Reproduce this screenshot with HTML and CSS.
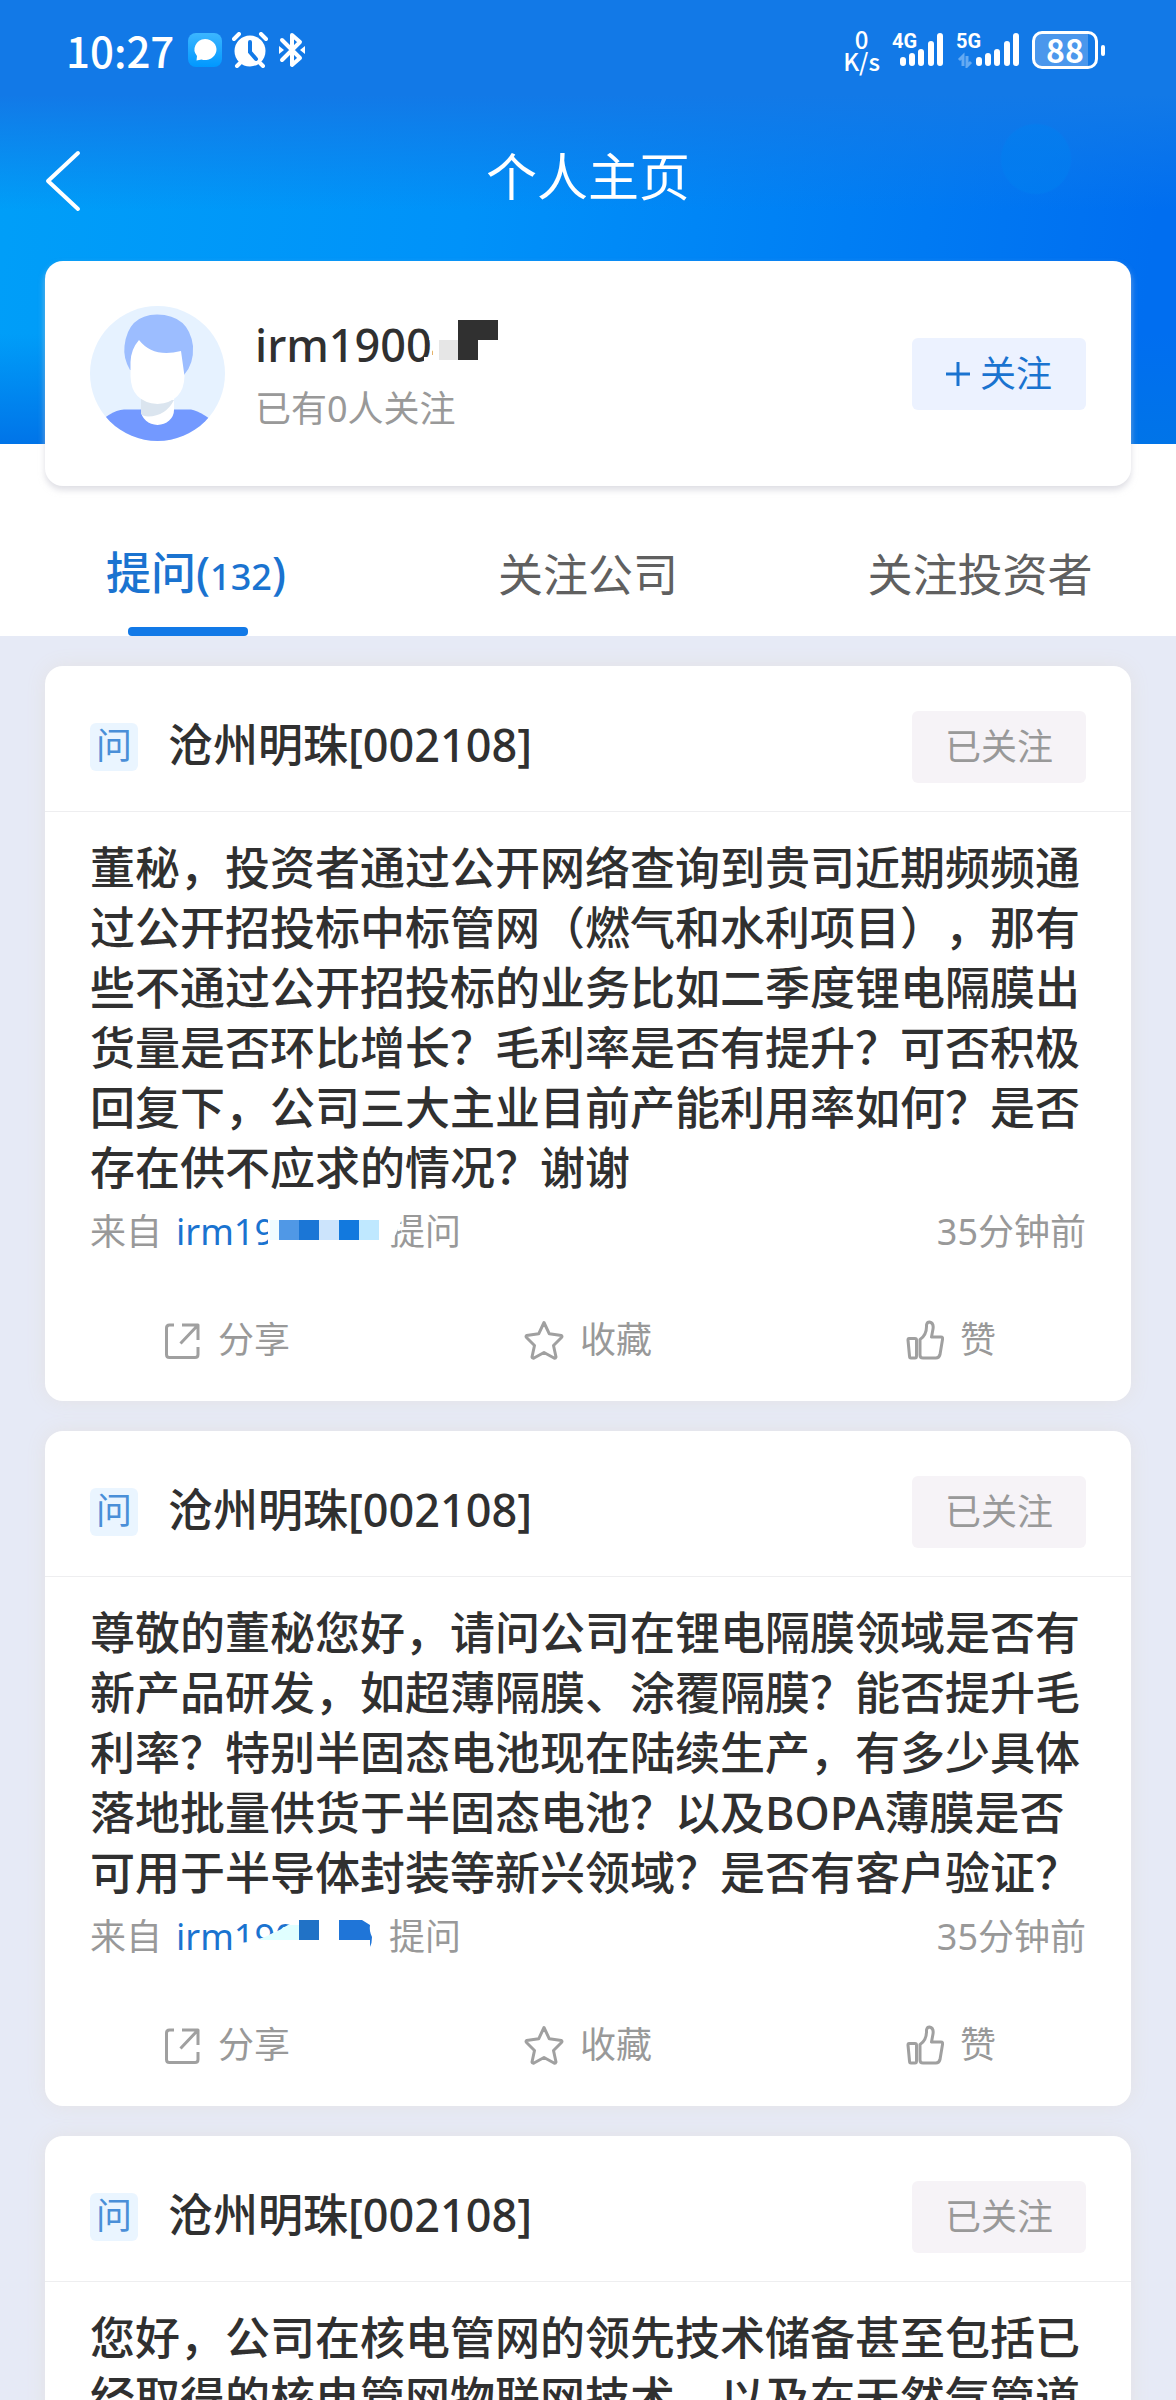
FILE: index.html
```html
<!DOCTYPE html>
<html lang="zh-CN">
<head>
<meta charset="utf-8">
<meta name="viewport" content="width=device-width, initial-scale=1">
<title>个人主页</title>
<link rel="stylesheet" href="styles.css">
</head>
<body>
<svg class="sprite" aria-hidden="true">
  <symbol id="icon-share" viewBox="0 0 40 40">
    <path d="M12 5H7.500Q4.500 5 4.500 8V34.500Q4.500 37.500 7.500 37.500H33Q36 37.500 36 34.500V27M20 5H36V20M36 5L18.500 23.500" />
  </symbol>
  <symbol id="icon-star" viewBox="0 0 40 40">
    <path d="M20 2.500L25.300 13.800L37.500 15.500Q38.500 16.500 37.500 17.500L29.500 25.500L32 37Q31.500 38.500 30 38L20 32.500L10 38Q8.500 38.500 8 37L10.500 25.500L2.500 17.500Q1.500 16.500 2.500 15.500L14.700 13.800Z" />
  </symbol>
  <symbol id="icon-like" viewBox="0 0 40 40">
    <path d="M5 18.500H11Q12.500 18.500 12.500 20V36Q12.500 38 11 38H7Q5.500 38 5.500 36L4 20Q4 18.500 5 18.500ZM16 19.500Q23 15 22.500 5Q23 2 25.500 2Q30 3 29 9L27.500 17H37Q39 17 38.500 19.500L36 34.500Q35 38 32 38H19Q16 38 16 35Z" />
  </symbol>
</svg>

<div class="app">
  <header class="hero">
    <div class="status">
      <div class="status-side">
        <span class="clock">10:27</span>
        <svg class="chat" width="34" height="34" viewBox="0 0 34 34" aria-hidden="true">
          <defs><linearGradient id="chatFill" x1="0" y1="0" x2="0" y2="1"><stop offset="0" stop-color="#3cb6ff"/><stop offset="1" stop-color="#0098ff"/></linearGradient></defs>
          <rect width="34" height="34" rx="8" fill="url(#chatFill)"/>
          <path d="M17 6a11.500 10.500 0 1 1-3.500 20.500L8.500 27.500L9 23A11.500 10.500 0 0 1 17 6Z" fill="#fff"/>
        </svg>
        <svg class="alarm" width="36" height="36" viewBox="0 0 36 36" aria-hidden="true">
          <circle cx="18" cy="19" r="15.500" fill="#fff"/>
          <path d="M2 7L7 2M34 7L29 2M8 31L5 34M28 31L31 34" stroke="#fff" stroke-width="4" stroke-linecap="round"/>
          <path d="M18 10V20L24 27" stroke="#1279e7" stroke-width="4" fill="none" stroke-linecap="round"/>
        </svg>
        <svg width="26" height="36" viewBox="0 0 26 36" aria-hidden="true">
          <path d="M3 8L21 26L13 33V3L21 10L3 28" stroke="#fff" stroke-width="4" fill="none" stroke-linejoin="round" stroke-linecap="round"/>
          <path d="M0 14L5 18L0 22ZM26 14L21 18L26 22Z" fill="#fff"/>
        </svg>
      </div>
      <div class="status-side">
        <span class="speed">0<br>K/s</span>
        <span class="signal">
          <span class="net">4G</span>
          <svg width="52" height="36" viewBox="0 0 52 36" aria-hidden="true"><path d="M11 28V31M20 24V31M29 20V31M39 12V31M48 4V31" stroke="#fff" stroke-width="6" stroke-linecap="round"/></svg>
        </span>
        <span class="signal">
          <span class="net">5G</span>
          <svg width="64" height="36" viewBox="0 0 64 36" aria-hidden="true"><path d="M23 28V31M32 24V31M41 20V31M51 12V31M60 4V31" stroke="#fff" stroke-width="6" stroke-linecap="round"/><path d="M3 28L7 24V34M11 24V34L15 30" stroke="#65aaf2" stroke-width="3" fill="none"/></svg>
        </span>
        <span class="battery">88</span>
      </div>
    </div>

    <nav class="nav">
      <button class="back" type="button" aria-label="返回">
        <svg width="36" height="62" viewBox="0 0 36 62" aria-hidden="true"><path d="M33 3L3 31L33 59" stroke="#fff" stroke-width="4" fill="none" stroke-linecap="round" stroke-linejoin="round"/></svg>
      </button>
      <h1 class="nav-title">个人主页</h1>
    </nav>

    <section class="profile">
      <svg class="avatar" viewBox="0 0 135 135" aria-hidden="true">
        <defs><clipPath id="face"><circle cx="67.500" cy="67.500" r="67.500"/></clipPath></defs>
        <g clip-path="url(#face)">
          <rect width="135" height="135" fill="#e6f2ff"/>
          <path d="M0 125Q20 104 34 103.500H101Q112 105 135 125V135H0Z" fill="#7399ff"/>
          <path d="M51 90H84V104A16.500 15 0 0 1 51 104Z" fill="#fff"/>
          <path d="M51 92L84 94Q76 110 58 110.500Q53 110 51 108Z" fill="#dbe5ef"/>
          <path d="M40 64Q33 52 34.500 40Q38 9 67 8.500Q99 9 103 40Q104 58 94 69Z" fill="#9cbdff"/>
          <path d="M40.500 56Q41 43 49 34Q63 52 91 45L94.500 70Q94 96 67.500 98Q41 96 40.500 70Z" fill="#fff"/>
        </g>
      </svg>
      <div class="profile-text">
        <h2 class="profile-name">irm19004
          <svg class="name-mask" width="76" height="48" viewBox="0 0 76 48" aria-hidden="true">
            <path d="M10 0H76V48H0V36H9V19H5Z" fill="#fff"/>
            <path d="M15 19H34V39H15Z" fill="#e6e6e6"/>
            <path d="M34 -1H74V19H54V39H34Z" fill="#303030"/>
          </svg>
        </h2>
        <p class="profile-fans">已有0人关注</p>
      </div>
      <button class="follow" type="button">
        <svg width="24" height="24" viewBox="0 0 24 24" aria-hidden="true"><path d="M12 0V24M0 12H24" stroke="#1a73d0" stroke-width="3"/></svg>关注
      </button>
    </section>

    <div class="tabs" role="tablist">
      <button class="tab tab-active" type="button" role="tab" aria-selected="true">提问(<span class="tab-count">132</span>)</button>
      <button class="tab" type="button" role="tab" aria-selected="false">关注公司</button>
      <button class="tab" type="button" role="tab" aria-selected="false">关注投资者</button>
    </div>
  </header>

  <main class="feed">
    <article class="card">
      <header class="card-head">
        <span class="badge">问</span>
        <h3 class="company">沧州明珠[002108]</h3>
        <button class="follow followed" type="button">已关注</button>
      </header>
      <p class="question">董秘，投资者通过公开网络查询到贵司近期频频通过公开招投标中标管网（燃气和水利项目），那有些不通过公开招投标的业务比如二季度锂电隔膜出货量是否环比增长？毛利率是否有提升？可否积极回复下，公司三大主业目前产能利用率如何？是否存在供不应求的情况？谢谢</p>
      <div class="meta">
        <span>来自</span>
        <a class="asker" href="#">irm19
          <svg class="asker-mask" width="230" height="48" viewBox="0 0 230 48" aria-hidden="true">
            <path d="M94 0H218L229 8L222 26L216 36H94Z" fill="#fff"/>
            <path d="M96 12H105V32H96Z" fill="#effcff"/>
            <path d="M105 12H125V32H105Z" fill="#5098e6"/>
            <path d="M125 12H145V32H125Z" fill="#1b76d6"/>
            <path d="M145 12H165V32H145Z" fill="#cce4fc"/>
            <path d="M165 12H185V32H165Z" fill="#1279de"/>
            <path d="M185 12H205V32H185Z" fill="#bfe8ff"/>
          </svg>
        </a>
        <span>提问</span>
        <time class="ago">35分钟前</time>
      </div>
      <footer class="actions">
        <button class="action" type="button"><svg class="icon" aria-hidden="true"><use href="#icon-share"/></svg>分享</button>
        <button class="action" type="button"><svg class="icon" aria-hidden="true"><use href="#icon-star"/></svg>收藏</button>
        <button class="action" type="button"><svg class="icon" aria-hidden="true"><use href="#icon-like"/></svg>赞</button>
      </footer>
    </article>

    <article class="card">
      <header class="card-head">
        <span class="badge">问</span>
        <h3 class="company">沧州明珠[002108]</h3>
        <button class="follow followed" type="button">已关注</button>
      </header>
      <p class="question">尊敬的董秘您好，请问公司在锂电隔膜领域是否有新产品研发，如超薄隔膜、涂覆隔膜？能否提升毛利率？特别半固态电池现在陆续生产，有多少具体落地批量供货于半固态电池？以及BOPA薄膜是否可用于半导体封装等新兴领域？是否有客户验证？</p>
      <div class="meta">
        <span>来自</span>
        <a class="asker" href="#">irm190
          <svg class="asker-mask" width="230" height="48" viewBox="0 0 230 48" aria-hidden="true">
            <path d="M58 31L74 29L88 25L106 17L125 14V48H58Z" fill="#fff"/>
            <path d="M84 27L104 18L114 12H125V27Z" fill="#e0ffff"/>
            <path d="M125 7H145V27H125Z" fill="#2172c6"/>
            <path d="M165 7H188L196 12Q195 18 198 24Q198 30 196 34V27H165Z" fill="#1f75d8"/>
          </svg>
        </a>
        <span>提问</span>
        <time class="ago">35分钟前</time>
      </div>
      <footer class="actions">
        <button class="action" type="button"><svg class="icon" aria-hidden="true"><use href="#icon-share"/></svg>分享</button>
        <button class="action" type="button"><svg class="icon" aria-hidden="true"><use href="#icon-star"/></svg>收藏</button>
        <button class="action" type="button"><svg class="icon" aria-hidden="true"><use href="#icon-like"/></svg>赞</button>
      </footer>
    </article>

    <article class="card">
      <header class="card-head">
        <span class="badge">问</span>
        <h3 class="company">沧州明珠[002108]</h3>
        <button class="follow followed" type="button">已关注</button>
      </header>
      <p class="question">您好，公司在核电管网的领先技术储备甚至包括已经取得的核电管网物联网技术，以及在天然气管道</p>
    </article>
  </main>
</div>
</body>
</html>
```
FILE: styles.css
```css
* {
  box-sizing: border-box;
  margin: 0;
  padding: 0;
}

body {
  font-family: "Noto Sans", "Noto Sans CJK SC", sans-serif;
  font-size: 36px;
  line-height: 48px;
  color: #303030;
  background: #e6eaf6;
  text-spacing-trim: space-all;
}

button {
  font: inherit;
  color: inherit;
  border: 0;
  background: none;
}

svg {
  flex: none;
}

.sprite {
  display: none;
}

.app {
  display: flex;
  flex-direction: column;
  height: 100vh;
}

/* Header */

.hero {
  flex: none;
  background:
    radial-gradient(circle at calc(100% - 140px) 159px, #0080f080 34px, #0080f000 36px) 0 0 / 100% 444px no-repeat,
    linear-gradient(180deg, #1279e7 0, #1279e7 95px, #1279e700 210px) 0 0 / 100% 444px no-repeat,
    linear-gradient(0deg, #0074e8 0, #0074e800 110px) 0 0 / 100% 444px no-repeat,
    linear-gradient(98deg, #009ff8 0, #0092f9 40%, #006ef0 96%) 0 0 / 100% 444px no-repeat,
    #fff;
}

.status {
  display: flex;
  justify-content: space-between;
  align-items: center;
  height: 100px;
  padding: 0 78px 0 66px;
  color: #fff;
}

.status-side {
  display: flex;
  align-items: center;
}

.clock {
  font-family: "Noto Sans CJK SC", sans-serif;
  font-size: 42px;
  font-weight: 500;
}

.chat {
  margin: 0 10px 0 14px;
}

.alarm {
  margin-right: 11px;
}

.speed {
  font-family: "Noto Sans CJK SC", sans-serif;
  font-size: 24px;
  font-weight: 500;
  line-height: 22px;
  text-align: center;
}

.signal {
  position: relative;
  display: flex;
  margin-left: 12px;
}

.net {
  position: absolute;
  top: 0;
  left: 0;
  font-family: Roboto, sans-serif;
  font-size: 20px;
  font-weight: 700;
  line-height: 18px;
}

.battery {
  position: relative;
  width: 66px;
  height: 38px;
  margin-left: 12px;
  border: 3px solid #fff;
  border-radius: 10px;
  background: linear-gradient(90deg, #4b97ec 88%, #1279e7 88%);
  font-family: "Noto Sans CJK SC", sans-serif;
  font-size: 32px;
  font-weight: 700;
  line-height: 30px;
  text-align: center;
}

.battery::after {
  content: "";
  position: absolute;
  top: 11px;
  right: -10px;
  width: 4px;
  height: 11px;
  border-radius: 2px;
  background: #fff;
}

.nav {
  display: grid;
  grid-template-columns: 90px 1fr 90px;
  align-items: center;
  height: 161px;
  color: #fff;
}

.back {
  display: flex;
  padding-left: 45px;
}

.nav-title {
  padding-bottom: 10px;
  font-size: 51px;
  font-weight: 400;
  line-height: 60px;
  text-align: center;
}

.profile {
  display: flex;
  align-items: center;
  height: 225px;
  margin: 0 45px;
  padding: 0 45px;
  border-radius: 18px;
  background: #fff;
  box-shadow: 0 4px 6px #c8c8d299;
}

.avatar {
  width: 135px;
  height: 135px;
  margin-right: 30px;
}

.profile-text {
  flex: 1;
}

.profile-name {
  position: relative;
  width: max-content;
  font-size: 45px;
  font-weight: 500;
  line-height: 60px;
}

.name-mask {
  position: absolute;
  top: 6px;
  left: 169px;
  overflow: visible;
}

.profile-fans {
  padding-top: 10px;
  color: #999;
}

.follow {
  display: flex;
  justify-content: center;
  align-items: center;
  gap: 10px;
  width: 174px;
  height: 72px;
  border-radius: 6px;
  background: #ecf2ff;
  color: #1a73d0;
}

.followed {
  background: #f6f3f7;
  color: #999;
}

.tabs {
  display: grid;
  grid-template-columns: repeat(3, 1fr);
  height: 150px;
  padding-top: 28px;
}

.tab {
  position: relative;
  font-size: 45px;
  color: #606060;
}

.tab-active {
  font-weight: 500;
  color: #1a73d0;
}

.tab-active::after {
  content: "";
  position: absolute;
  bottom: 0;
  left: calc(50% - 68px);
  width: 120px;
  height: 9px;
  border-radius: 4px;
  background: #1279e7;
}

.tab-count {
  font-size: 36px;
}

/* Question list */

.feed {
  display: flex;
  flex: 1;
  flex-direction: column;
  gap: 30px;
  min-height: 0;
  padding: 30px 45px;
  overflow-y: auto;
  scrollbar-width: none;
}

.card {
  flex: none;
  border-radius: 18px;
  background: #fff;
  box-shadow: 0 0 20px #e4e2e4;
}

.card-head {
  display: flex;
  align-items: center;
  padding: 45px 45px 28px;
  border-bottom: 1px solid #eeeef0;
}

.badge {
  width: 48px;
  height: 48px;
  margin-right: 30px;
  border-radius: 6px;
  background: #eaf5ff;
  color: #4a8fd8;
  font-size: 36px;
  line-height: 46px;
  text-align: center;
}

.company {
  flex: 1;
  padding-bottom: 4px;
  font-size: 45px;
  font-weight: 500;
  line-height: 60px;
}

.question {
  padding: 26px 45px 0;
  font-size: 45px;
  font-weight: 500;
  line-height: 60px;
}

.meta {
  display: flex;
  gap: 12px;
  padding: 10px 45px 0;
  color: #999;
}

.asker {
  position: relative;
  width: 203px;
  padding-left: 2px;
  color: #1a73d0;
  text-decoration: none;
}

.asker-mask {
  position: absolute;
  top: 0;
  left: 0;
  z-index: 1;
}

.ago {
  margin-left: auto;
}

.actions {
  display: grid;
  grid-template-columns: repeat(3, 1fr);
  padding: 64px 0 41px;
  color: #999;
}

.action {
  display: flex;
  justify-content: center;
  align-items: center;
  gap: 16px;
  line-height: 40px;
}

.icon {
  width: 40px;
  height: 40px;
  fill: none;
  stroke: #a0a0a0;
  stroke-width: 3;
  stroke-linejoin: round;
}
```
